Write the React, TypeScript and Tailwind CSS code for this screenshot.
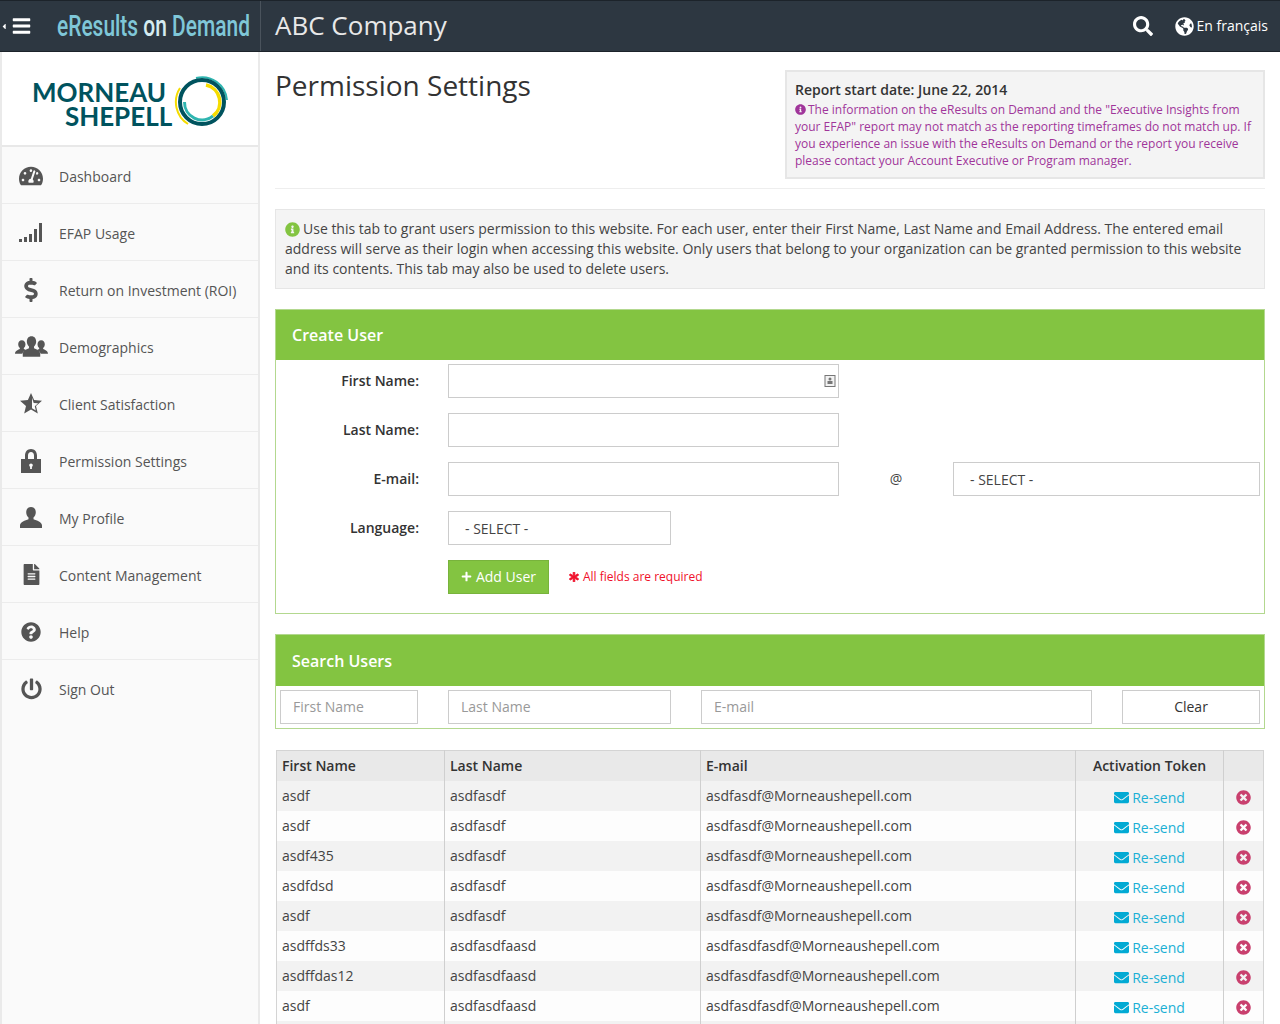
import React from 'react';
import {
  FaAsterisk, FaBars, FaCaretLeft, FaDollarSign, FaEnvelope, FaFileAlt, FaGlobeAmericas, FaInfoCircle,
  FaPlus, FaPowerOff, FaQuestionCircle, FaSearch, FaTachometerAlt, FaTimesCircle,
} from 'react-icons/fa';

const SignalIcon = () => (
  <svg viewBox="0 0 24 20" className="w-[24px] h-[20px]" fill="currentColor">
    <rect x="0" y="16" width="3" height="3" />
    <rect x="5" y="14" width="3" height="5" />
    <rect x="10" y="11" width="3" height="8" />
    <rect x="15" y="6" width="3" height="13" />
    <rect x="20" y="0" width="3" height="19" />
  </svg>
);

const GroupIcon = () => (
  <svg viewBox="0 0 34 21" className="w-[33px] h-[21px]" fill="currentColor">
    <path d="M7 4c2.400 0 3.800 1.800 3.800 4.200 0 1.600-.7 3-1.700 3.800v1.200c1 .4 1.600.8 2.100 1.200-1.800 1-3.200 2.200-3.700 3.600H0c0-2.800 2.800-4 5-4.900V12c-1-.8-1.700-2.200-1.700-3.800C3.300 5.800 4.600 4 7 4z" />
    <path d="M27 4c-2.400 0-3.800 1.800-3.800 4.200 0 1.600.7 3 1.700 3.800v1.200c-1 .4-1.600.8-2.100 1.200 1.800 1 3.200 2.200 3.700 3.600H34c0-2.800-2.800-4-5-4.900V12c1-.8 1.700-2.200 1.700-3.800C30.700 5.800 29.400 4 27 4z" />
    <path d="M17 0c3 0 4.800 2.300 4.800 5.400 0 2.100-.9 4-2.200 5v1.800c3.100 1.200 6.400 2.800 6.400 6V21H8v-2.800c0-3.200 3.300-4.800 6.400-6v-1.800c-1.300-1-2.200-2.900-2.200-5C12.200 2.300 14 0 17 0z" />
  </svg>
);

const StarIcon = () => (
  <svg viewBox="0 0 22 21" className="w-[22px] h-[21px]" fill="currentColor">
    <path fillRule="evenodd" d="M11 0l3.100 7 7.900.7-6 5.200 1.800 7.600L11 16.500l-6.800 4 1.800-7.600-6-5.200L7.900 7 11 0zm1 4.800v10.500l3.800 2.200-1-4.300 3.300-2.900-4.400-.4L12 4.800z" />
  </svg>
);

const LockIcon = () => (
  <svg viewBox="0 0 20 24" className="w-[20px] h-[24px]" fill="currentColor">
    <path fillRule="evenodd" d="M4 10V6.500C4 2.800 6.400 0 10 0s6 2.800 6 6.500V10h4v14H0V10h4zm3 0h6V6.500C13 4.500 11.800 3 10 3S7 4.500 7 6.500V10zm3 4.500c-1 0-1.800.8-1.800 1.800 0 .7.4 1.200.9 1.500V20h1.800v-2.200c.5-.3.900-.8.900-1.500 0-1-.8-1.800-1.800-1.800z" />
  </svg>
);

const PersonIcon = () => (
  <svg viewBox="0 0 22 21" className="w-[22px] h-[21px]" fill="currentColor">
    <path d="M11 0c3 0 4.800 2.200 4.800 5.300 0 2.200-.9 4.100-2.300 5.100v1.800c3.200 1.100 8.500 2.900 8.500 6.300V21H0v-2.500c0-3.400 5.300-5.200 8.500-6.300v-1.800C7.100 9.400 6.200 7.500 6.200 5.300 6.200 2.200 8 0 11 0z" />
  </svg>
);

const navItems = [
  { label: 'Dashboard', icon: <FaTachometerAlt className="w-[24px] h-[24px]" /> },
  { label: 'EFAP Usage', icon: <SignalIcon /> },
  { label: 'Return on Investment (ROI)', icon: <FaDollarSign className="w-[24px] h-[24px]" /> },
  { label: 'Demographics', icon: <GroupIcon /> },
  { label: 'Client Satisfaction', icon: <StarIcon /> },
  { label: 'Permission Settings', icon: <LockIcon /> },
  { label: 'My Profile', icon: <PersonIcon /> },
  { label: 'Content Management', icon: <FaFileAlt className="w-[17px] h-[21px]" /> },
  { label: 'Help', icon: <FaQuestionCircle className="w-[20px] h-[20px]" /> },
  { label: 'Sign Out', icon: <FaPowerOff className="w-[21px] h-[22px]" /> },
];

const users = [
  ['asdf', 'asdfasdf', 'asdfasdf@Morneaushepell.com'],
  ['asdf', 'asdfasdf', 'asdfasdf@Morneaushepell.com'],
  ['asdf435', 'asdfasdf', 'asdfasdf@Morneaushepell.com'],
  ['asdfdsd', 'asdfasdf', 'asdfasdf@Morneaushepell.com'],
  ['asdf', 'asdfasdf', 'asdfasdf@Morneaushepell.com'],
  ['asdffds33', 'asdfasdfaasd', 'asdfasdfasdf@Morneaushepell.com'],
  ['asdffdas12', 'asdfasdfaasd', 'asdfasdfasdf@Morneaushepell.com'],
  ['asdf', 'asdfasdfaasd', 'asdfasdfasdf@Morneaushepell.com'],
];

const Logo = () => (
  <div className="flex items-start h-[95px] pl-[30px] pt-[28px] bg-white border-b-[2px] border-[#e8e8e8]">
    <div className="flex flex-col items-end font-['Lato',sans-serif] font-bold text-[#00535e] text-[26px] leading-[24px]">
      <span>MORNEAU</span>
      <span className="mr-[-6px]">SHEPELL</span>
    </div>
    <svg viewBox="0 0 54 54" className="w-[54px] h-[54px] ml-[8px] mt-[-4px] shrink-0">
      <path d="M6 12 A 26 26 0 0 0 14 48" fill="none" stroke="#f5dc00" strokeWidth="2" />
      <path d="M22 2 A 25 25 0 0 1 53 24" fill="none" stroke="#2fb5b0" strokeWidth="2" />
      <circle cx="28" cy="26" r="22" fill="none" stroke="#00535e" strokeWidth="4" />
      <path d="M32 9 A 17.500 17.500 0 0 1 39 40" fill="none" stroke="#f5dc00" strokeWidth="3.500" />
      <path d="M39 40 A 17.500 17.500 0 0 1 10.500 26" fill="none" stroke="#2fb5b0" strokeWidth="3" />
    </svg>
  </div>
);

const Field = ({ placeholder, className = '', children }: { placeholder?: string; className?: string; children?: React.ReactNode }) => (
  <div className={`relative h-[34px] border border-[#ccc] bg-white flex items-center text-[14px] ${className}`}>
    {placeholder && <span className="pl-[12px] pb-[2px] text-[#999]">{placeholder}</span>}
    {children}
  </div>
);

const Label = ({ children }: { children: React.ReactNode }) => (
  <div className="h-[34px] flex items-center justify-end pr-[29px] pb-[2px] font-semibold text-[14px] text-[#333]">{children}</div>
);

const PanelHeader = ({ title }: { title: string }) => (
  <div className="h-[50px] bg-[#83c441] flex items-center pl-[16px] text-white font-semibold text-[16px]">{title}</div>
);

const App: React.FC = () => {
  return (
    <div className="w-[1280px] h-[1024px] overflow-hidden flex flex-col bg-white font-['Open_Sans',sans-serif] text-[14px] text-[#444]">
      {/* Top bar */}
      <header className="h-[52px] shrink-0 flex items-center bg-[#2d3741] border-y border-[#1c232a] text-white">
        <div className="w-[261px] h-full shrink-0 flex items-center border-r border-[#4a535c]">
          <FaCaretLeft className="w-[6px] h-[9px] ml-[1px]" />
          <FaBars className="w-[19px] h-[20px] ml-[5px]" />
          <div className="ml-[26px] w-[194px] h-full flex items-center whitespace-nowrap pt-[2px]">
            <span className="inline-block origin-left scale-x-[0.722] font-['Roboto',sans-serif] font-medium text-[29px] text-[#7fc7d8]">
              eResults <span className="text-[#d5ecf1]">on</span> Demand
            </span>
          </div>
        </div>
        <div className="ml-[14px] pb-[1px] text-[26px] text-[#e8e8e8]">ABC Company</div>
        <div className="ml-auto flex items-center mr-[12px]">
          <FaSearch className="w-[20px] h-[20px]" />
          <FaGlobeAmericas className="w-[19px] h-[19px] ml-[22px]" />
          <span className="ml-[3px] pb-[2px]">En français</span>
        </div>
      </header>

      <div className="flex flex-1 min-h-0">
        {/* Sidebar */}
        <aside className="w-[260px] shrink-0 bg-[#fafafa] border-l-2 border-r-2 border-[#eaeaea]">
          <Logo />
          {navItems.map((item, i) => (
            <div key={item.label} className={`h-[57px] flex items-center pt-[2px] text-[#555] ${i < navItems.length - 1 ? 'border-b border-[#ececec]' : ''}`}>
              <div className="w-[57px] flex justify-center pl-[1px] text-[#555] mt-[-1px]">{item.icon}</div>
              <span>{item.label}</span>
            </div>
          ))}
        </aside>

        {/* Main */}
        <main className="flex-1 min-w-0 pl-[15px] pr-[15px]">
          <div className="flex justify-between h-[137px] border-b border-[#eee] pt-[18px]">
            <h1 className="text-[28px] text-[#333] leading-[30px]">Permission Settings</h1>
            <div className="w-[480px] h-[109px] bg-[#f4f4f4] border-2 border-[#e6e6e6] px-[8px] pt-[8px] text-[12px] leading-[17px] text-[#a0359a]">
              <div className="text-[14px] font-semibold text-[#333] leading-[20px] mb-[1px]">Report start date: June 22, 2014</div>
              <div>
                <FaInfoCircle className="inline w-[11px] h-[11px] mr-[2px] mb-[2px]" />
                The information on the eResults on Demand and the "Executive Insights from your EFAP" report may not match as the reporting timeframes do not match up. If you experience an issue with the eResults on Demand or the report you receive please contact your Account Executive or Program manager.
              </div>
            </div>
          </div>

          <div className="mt-[20px] h-[80px] bg-[#f4f4f4] border border-[#e6e6e6] px-[9px] pt-[9px] leading-[20px] text-[#444]">
            <FaInfoCircle className="inline w-[15px] h-[15px] text-[#83c441] mr-[3px] mb-[2px]" />
            Use this tab to grant users permission to this website. For each user, enter their First Name, Last Name and Email Address. The entered email address will serve as their login when accessing this website. Only users that belong to your organization can be granted permission to this website and its contents. This tab may also be used to delete users.
          </div>

          {/* Create User */}
          <section className="mt-[20px] h-[305px] border border-[#b3d88f]">
            <PanelHeader title="Create User" />
            <div className="grid grid-cols-[172px_391px_114px_307px] gap-y-[15px] pt-[4px] items-center">
              <Label>First Name:</Label>
              <Field>
                <svg viewBox="0 0 12 12" className="absolute right-[2px] top-[10px] w-[12px] h-[12px]">
                  <rect x="1" y="0.5" width="10" height="11" fill="#f2f2f2" stroke="#777" />
                  <circle cx="6" cy="4" r="1.500" fill="#777" />
                  <rect x="3.500" y="6" width="5" height="3" fill="#777" />
                </svg>
              </Field>
              <div className="col-span-2" />
              <Label>Last Name:</Label>
              <Field />
              <div className="col-span-2" />
              <Label>E-mail:</Label>
              <Field />
              <div className="text-center text-[14px] pb-[2px] text-[#444]">@</div>
              <Field className="pl-[16px]">- SELECT -</Field>
              <Label>Language:</Label>
              <Field className="pl-[16px] w-[223px]">- SELECT -</Field>
              <div className="col-span-2" />
              <div />
              <div className="col-span-3 flex items-center">
                <button className="h-[34px] w-[101px] pb-[2px] flex items-center justify-center bg-[#83c441] border border-[#78b33c] text-white">
                  <FaPlus className="w-[11px] h-[11px] mr-[4px] mt-[1px]" />
                  Add User
                </button>
                <span className="ml-[20px] flex items-center text-[12px] text-[#f0102a]">
                  <FaAsterisk className="w-[10px] h-[10px] mr-[4px]" stroke="currentColor" strokeWidth={40} />
                  All fields are required
                </span>
              </div>
            </div>
          </section>

          {/* Search Users */}
          <section className="mt-[20px] h-[95px] border border-[#b3d88f]">
            <div className="h-[51px] bg-[#83c441] flex items-center pl-[16px] text-white font-semibold text-[16px]">Search Users</div>
            <div className="flex pt-[4px] pl-[4px]">
              <Field placeholder="First Name" className="w-[138px]" />
              <Field placeholder="Last Name" className="w-[223px] ml-[30px]" />
              <Field placeholder="E-mail" className="w-[391px] ml-[30px]" />
              <div className="w-[138px] ml-[30px] h-[34px] pb-[2px] border border-[#ccc] flex items-center justify-center text-[#333]">Clear</div>
            </div>
          </section>

          {/* Users table */}
          <table className="mt-[21px] ml-[1px] w-[987px] table-fixed border-collapse border border-[#d4d4d4]">
            <colgroup>
              <col className="w-[168px]" />
              <col className="w-[256px]" />
              <col className="w-[375px]" />
              <col className="w-[148px]" />
              <col className="w-[40px]" />
            </colgroup>
            <thead>
              <tr className="h-[30px] bg-[#e9e9e9] text-[#333] font-semibold text-left">
                <th className="font-semibold pl-[5px] border-r border-[#cfcfcf]">First Name</th>
                <th className="font-semibold pl-[5px] border-r border-[#cfcfcf]">Last Name</th>
                <th className="font-semibold pl-[5px] border-r border-[#cfcfcf]">E-mail</th>
                <th className="font-semibold text-center border-r border-[#cfcfcf]">Activation Token</th>
                <th />
              </tr>
            </thead>
            <tbody>
              {users.map((u, i) => (
                <tr key={i} className={`h-[30px] ${i % 2 === 0 ? 'bg-[#f2f2f2]' : 'bg-[#fdfdfd]'}`}>
                  <td className="pl-[5px] border-r border-[#cfcfcf]">{u[0]}</td>
                  <td className="pl-[5px] border-r border-[#cfcfcf]">{u[1]}</td>
                  <td className="pl-[5px] border-r border-[#cfcfcf]">{u[2]}</td>
                  <td className="border-r border-[#cfcfcf] text-[#1ab0d5]">
                    <div className="flex items-center justify-center pt-[3px]">
                      <FaEnvelope className="w-[15px] h-[15px] mr-[3px] text-[#02aad4]" />
                      Re-send
                    </div>
                  </td>
                  <td>
                    <div className="flex justify-center">
                      <FaTimesCircle className="w-[15px] h-[15px] text-[#c9406e] mt-[3px]" />
                    </div>
                  </td>
                </tr>
              ))}
              <tr className="h-[30px] bg-[#f2f2f2]">
                <td className="border-r border-[#cfcfcf]" />
                <td className="border-r border-[#cfcfcf]" />
                <td className="border-r border-[#cfcfcf]" />
                <td className="border-r border-[#cfcfcf]" />
                <td />
              </tr>
            </tbody>
          </table>
        </main>
      </div>
    </div>
  );
};

export default App;
